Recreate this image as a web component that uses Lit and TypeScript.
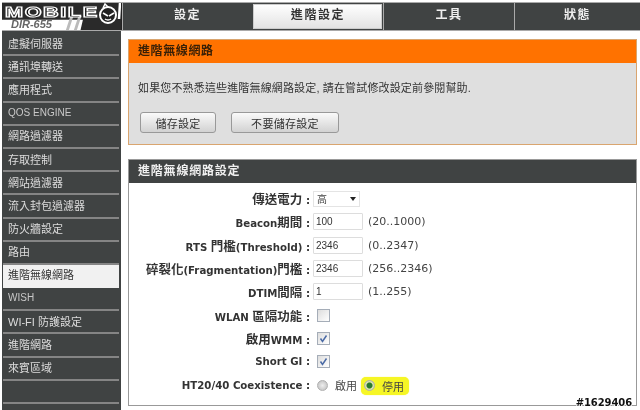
import { LitElement, html, css } from "lit";
import { customElement } from "lit/decorators.js";

const FONT = css`"Liberation Sans", "Noto Sans CJK TC", sans-serif`;
const NAV = ["虛擬伺服器","通訊埠轉送","應用程式","QOS ENGINE","網路過濾器","存取控制","網站過濾器","流入封包過濾器","防火牆設定","路由","進階無線網路","WISH","WI-FI 防護設定","進階網路","來賓區域",""];
const TABS = ["設定","進階設定","工具","狀態"];

@customElement("app-root")
export class AppRoot extends LitElement {
  static styles = css`
    :host { display: block; width: 640px; height: 410px; overflow: hidden; position: relative; background: #fff; font-family: ${FONT}; color: #222; filter: blur(0.3px); }
    .top { display: grid; grid-template-columns: 120px 130px 131px 131px 1fr; height: 27px; margin: 3px 0 0 2px; background:#404343; box-shadow: 0 -1px 0 #aaa, 0 1px 0 #aaa; }
    .logo { position: relative; background: #fff; border-right: 1px solid #222; overflow: hidden; }
    .dir { position: absolute; left: 9px; top: 16px; font: italic bold 11px/10px "Liberation Sans", sans-serif; color: #666; }
    .band { position: absolute; inset: 0; background: #2a2a2a; clip-path: polygon(0 0,100% 0,100% 100%,66% 100%,68% 62%,0 62%); }
    .slash { position: absolute; top: 13px; width: 3px; height: 15px; background: #bbb; transform: skewX(-18deg); }
    .brand { position: absolute; left: 3px; top: 4px; font: 700 14px/11px "Liberation Sans", sans-serif; letter-spacing: 1px; color: #111; -webkit-text-stroke: 1.1px #fff; transform: scaleX(1.55); transform-origin: left top; }
    .face { position: absolute; left: 95px; top: -2px; }
    .tab { display: flex; align-items: center; justify-content: center; padding-bottom: 6px; box-sizing: border-box; color: #eee; font-size: 12px; font-weight: 700; letter-spacing: 1.6px; border-left: 1px solid #aaa; }
    .tab.on { background: linear-gradient(#fff, #e2e2e2); color: #333; border: 1px solid #404343; border-left: 2px solid #404343; outline: 1px solid #ccc; outline-offset: -2px; }
    .main { display: grid; grid-template-columns: 119px 1fr; margin: 1px 0 0 2px; }
    .side { background: #404343; padding: 2px 1px 0 1px; height: 380px; box-sizing: border-box; }
    .item { height: 23.2px; box-sizing: border-box; display: flex; align-items: center; padding: 0 0 2px 5px; margin-right: 1px; color: #ddd; font-size: 11px; border-bottom: 2px solid #858585; }
    .item.latin { color: #c8c8c8; font-size: 10px; }
    .item.on { background: #f1f1f1; color: #333; border-color: #f1f1f1; }
    .content { padding: 8px 3px 0 7px; display: flex; flex-direction: column; gap: 14px; }
    .panel { border: 1px solid #999; }
    .panel.a { border-color: #d9a56f; background: #dfdfdf; height: 106px; box-sizing: border-box; }
    .ph { height: 23px; box-sizing: border-box; padding: 0 0 4px 9px; display: flex; align-items: center; font-size: 12px; font-weight: 700; letter-spacing: .6px; }
    .a .ph { background: #ff7200; color: #3a2006; }
    .b .ph { background: #404343; color: #f0f0f0; letter-spacing: .8px; }
    .msg { font-size: 11px; padding: 16px 0 0 9px; color: #333; letter-spacing: .15px; }
    .btns { display: flex; gap: 15px; padding: 17px 0 0 11px; }
    button { height: 21px; border: 1px solid #999; border-radius: 3px; background: linear-gradient(#fafafa,#d2d2d2); font: 11px ${FONT}; color: #333; letter-spacing: .3px; padding: 0; }
    .b1 { width: 76px; } .b2 { width: 108px; }
    .panel.b { height: 247px; box-sizing: border-box; background: #fff; position: relative; }
    .form { display: grid; grid-template-columns: 181px 1fr; grid-auto-rows: 23.3px; padding-top: 4px; align-items: center; }
    .lab { text-align: right; font: 700 10.2px "DejaVu Sans", sans-serif; color: #333; white-space: nowrap; }
    .cj { font: 700 12.5px "Noto Sans CJK TC", sans-serif; }
    .ctl { display: flex; align-items: center; padding-left: 3px; font: 11px "DejaVu Sans", "Noto Sans CJK TC", sans-serif; color: #444; }
    .input { width: 50px; height: 17px; box-sizing: border-box; border: 1px solid #ddd; border-radius: 1px; font: 10px "Liberation Sans", sans-serif; color: #333; padding-left: 2px; display: flex; align-items: center; margin-right: 5px; }
    .sel { width: 47px; height: 16px; border: 1px solid #e4e4e4; font: 10px ${FONT}; display: flex; align-items: center; justify-content: space-between; padding: 0 3px 0 3px; box-sizing: border-box; }
    .arrow { width: 0; height: 0; border: 3.5px solid transparent; border-top: 4px solid #222; border-bottom: 0; }
    .cb { width: 11px; height: 11px; margin-left: 4px; border: 1px solid #a5adb8; background: linear-gradient(135deg,#ddd,#fff); display: block; }
    .radio { width: 9px; height: 9px; border-radius: 50%; margin-left: 4px; border: 1px solid #b0b0b0; background: radial-gradient(#eee, #bbb); }
    .radio.on { background: radial-gradient(#2c7a2c 0 40%, #dfe9b0 55%, #bcc78e); }
    .rtext { font: 11px ${FONT}; }
    .hl { display: flex; align-items: center; gap: 7px; background: #f6f625; border-radius: 5px; padding: 0 5px 0 3px; margin: 1px 0 0 4px; height: 18px; box-sizing: border-box; box-shadow: 0 0 1px #f6f625; }
    .hl .radio { margin-left: 0; }
    .r1 { margin-left: 7px; }
    .wm { position: absolute; right: 8px; bottom: 2px; font: 700 10px "DejaVu Sans", sans-serif; color: #111; letter-spacing: -.1px; text-shadow: -1px 0 #fff, 1px 0 #fff, 0 -1px #fff, 0 1px #fff; }
  `;

  private row(label: string, ctl: unknown) {
    const parts = label.split(/([\u3400-\u9fff]+)/).filter(Boolean);
    return html`<div class="lab">${parts.map((p) => (/[\u3400-\u9fff]/.test(p) ? html`<span class="cj">${p}</span>` : p))} :</div><div class="ctl">${ctl}</div>`;
  }
  private check(on: boolean) {
    return html`<svg class="cb" viewBox="0 0 11 11"><path d="${on ? "M2.5 5.5l2 3 4-6" : ""}" fill="none" stroke="#4a6aa5" stroke-width="1.5"/></svg>`;
  }
  render() {
    return html`
      <div class="top">
        <div class="logo">
          <span class="dir">DIR-655</span>
          <div class="band"></div>
          <span class="slash" style="left:66px"></span><span class="slash" style="left:74px"></span>
          <span class="brand">MOBILE</span>
          <svg class="face" width="26" height="26" viewBox="0 0 26 26">
            <circle cx="11" cy="14" r="8" fill="#222" stroke="#fff" stroke-width="2"/>
            <path d="M6 12l5 3M17 12l-5 3M8 18q3 2 6 0" stroke="#fff" stroke-width="1.5" fill="none"/>
            <path d="M22 18L23 2" stroke="#fff" stroke-width="2.5"/>
            <path d="M6 7L8 3l3 3" stroke="#fff" stroke-width="1.5" fill="none"/>
          </svg>
        </div>
        ${TABS.map((t, i) => html`<div class="tab ${i === 1 ? "on" : ""}">${t}</div>`)}
      </div>
      <div class="main">
        <div class="side">
          ${NAV.map((n) => html`<div class="item ${n === "進階無線網路" ? "on" : ""} ${/^[A-Z ]+$/.test(n) ? "latin" : ""}">${n}</div>`)}
        </div>
        <div class="content">
          <div class="panel a">
            <div class="ph">進階無線網路</div>
            <div class="msg">如果您不熟悉這些進階無線網路設定, 請在嘗試修改設定前參閱幫助.</div>
            <div class="btns"><button class="b1">儲存設定</button><button class="b2">不要儲存設定</button></div>
          </div>
          <div class="panel b">
            <div class="ph">進階無線網路設定</div>
            <div class="form">
              ${this.row("傳送電力", html`<span class="sel">高<span class="arrow"></span></span>`)}
              ${this.row("Beacon期間", html`<span class="input">100</span>(20..1000)`)}
              ${this.row("RTS 門檻(Threshold)", html`<span class="input">2346</span>(0..2347)`)}
              ${this.row("碎裂化(Fragmentation)門檻", html`<span class="input">2346</span>(256..2346)`)}
              ${this.row("DTIM間隔", html`<span class="input">1</span>(1..255)`)}
              ${this.row("WLAN 區隔功能", this.check(false))}
              ${this.row("啟用WMM", this.check(true))}
              ${this.row("Short GI", this.check(true))}
              ${this.row("HT20/40 Coexistence", html`<span class="radio"></span><span class="rtext r1">啟用</span><span class="hl"><span class="radio on"></span><span class="rtext">停用</span></span>`)}
            </div>
          </div>
        </div>
      </div>
      <div class="wm">#1629406</div>
    `;
  }
}
